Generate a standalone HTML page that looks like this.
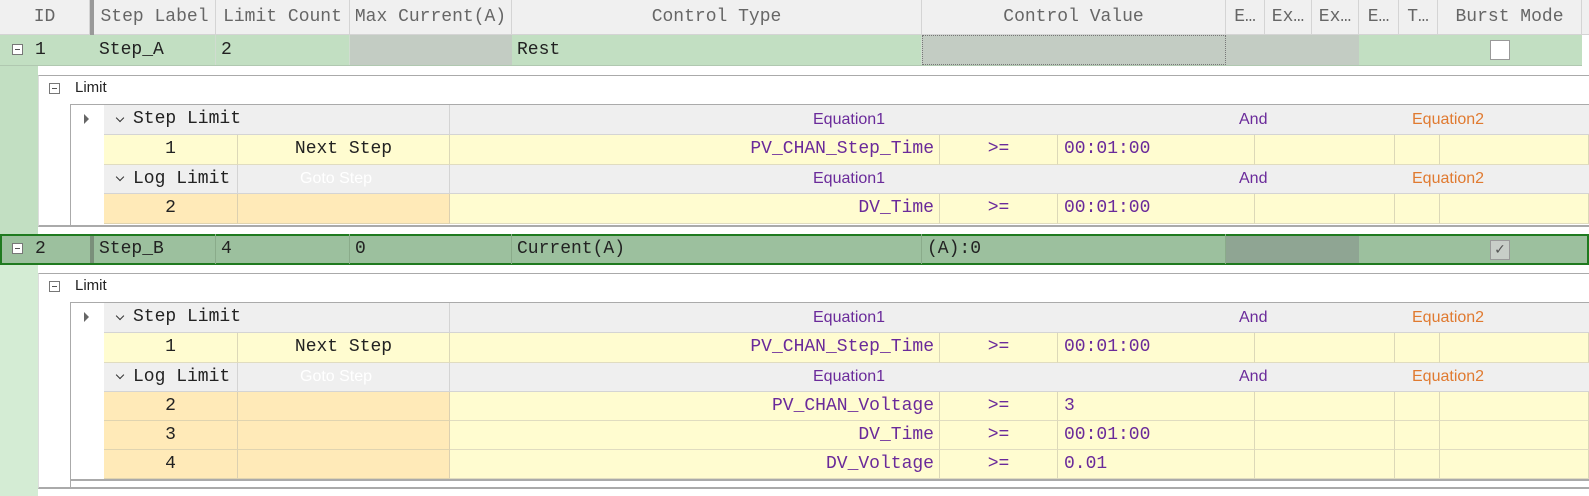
<!DOCTYPE html>
<html><head><meta charset="utf-8"><style>
*{box-sizing:border-box;margin:0;padding:0}
body{width:1589px;height:496px;overflow:hidden;background:#fff;position:relative;font-family:"Liberation Mono",monospace;font-size:18px;color:#222}
.a{position:absolute;white-space:nowrap;overflow:hidden}
.h{background:#f0f0f0;border-right:1px solid #d4d4d4;border-bottom:1px solid #d4d4d4;color:#666;text-align:center;line-height:34px;height:35px;top:0}
.c{line-height:30px;padding-left:5px;border-right:1px solid #d0dcd0}
.s{font-family:"Liberation Sans",sans-serif;font-size:16px}
.p{color:#6a2a9a}.o{color:#e07a30}
.gh{background:#efefef;border-bottom:1px solid #d4d4d4}
.y{background:#fffcd0;border-bottom:1px solid #e0dcc0;border-right:1px solid #dcd8b8}
.or{background:#ffeab8;border-bottom:1px solid #e0d4b0;border-right:1px solid #dcd0b0}
.box{border:1px solid #777;width:11px;height:11px;background:#fff}
.box:after{content:"";position:absolute;left:2px;top:4px;width:5px;height:1px;background:#555}
.chev{position:absolute;width:6px;height:6px;border-right:1.5px solid #333;border-bottom:1.5px solid #333;transform:rotate(45deg)}
</style></head><body>
<!-- header -->
<div class="a h" style="left:0;width:90px">ID</div>
<div class="a" style="left:90px;top:0;width:4px;height:66px;background:#999"></div>
<div class="a h" style="left:94px;width:122px">Step Label</div>
<div class="a h" style="left:216px;width:134px">Limit Count</div>
<div class="a h" style="left:350px;width:162px">Max Current(A)</div>
<div class="a h" style="left:512px;width:410px">Control Type</div>
<div class="a h" style="left:922px;width:304px">Control Value</div>
<div class="a h" style="left:1226px;width:39px">E…</div>
<div class="a h" style="left:1265px;width:47px">Ex…</div>
<div class="a h" style="left:1312px;width:47px">Ex…</div>
<div class="a h" style="left:1359px;width:40px">E…</div>
<div class="a h" style="left:1399px;width:39px">T…</div>
<div class="a h" style="left:1438px;width:144px">Burst Mode</div>
<div class="a h" style="left:1582px;width:7px;border-right:none"></div>

<!-- row 1 -->
<div class="a" style="left:0;top:35px;width:1582px;height:31px;background:#c2dfc2;border-bottom:1px solid #b0c8b0"></div>
<div class="a box" style="left:12px;top:44px"></div>
<div class="a c" style="left:30px;top:35px;width:60px;border:none">1</div>
<div class="a c" style="left:94px;top:35px;width:122px">Step_A</div>
<div class="a c" style="left:216px;top:35px;width:134px">2</div>
<div class="a" style="left:350px;top:35px;width:162px;height:30px;background:#c3ccc3"></div>
<div class="a c" style="left:512px;top:35px;width:410px">Rest</div>
<div class="a" style="left:922px;top:35px;width:304px;height:30px;background:#c3ccc3;border:1px dotted #777"></div>
<div class="a" style="left:1226px;top:35px;width:133px;height:30px;background:#c3ccc3"></div>
<div class="a" style="left:1490px;top:40px;width:20px;height:20px;background:#fff;border:1px solid #999"></div>

<!-- detail 1 -->
<div class="a" style="left:0;top:66px;width:38px;height:168px;background:#c2dfc2"></div>
<div class="a" style="left:38px;top:75px;width:1551px;height:152px;border-top:1px solid #aaa;border-bottom:2px solid #aaa;border-left:1px solid #ddd"></div>
<div class="a box" style="left:49px;top:83px"></div>
<div class="a s" style="left:75px;top:78px;font-size:15px;line-height:20px">Limit</div>
<div class="a" style="left:70px;top:104px;width:1519px;height:121px;border-left:1px solid #aaa;border-top:1px solid #aaa"></div>
<div class="a" style="left:84px;top:114px;width:0;height:0;border-left:5px solid #666;border-top:5px solid transparent;border-bottom:5px solid transparent"></div>

<div class="a gh" style="left:104px;top:105px;width:1485px;height:30px"></div>
<div class="a" style="left:449px;top:105px;width:1px;height:30px;background:#d4d4d4"></div>
<div class="chev" style="left:117px;top:115px"></div>
<div class="a" style="left:133px;top:105px;line-height:29px">Step Limit</div>
<div class="a s p" style="left:813px;top:105px;line-height:29px">Equation1</div>
<div class="a s p" style="left:1239px;top:105px;line-height:29px">And</div>
<div class="a s o" style="left:1412px;top:105px;line-height:29px">Equation2</div>

<div class="a y" style="left:104px;top:135px;width:134px;height:30px;text-align:center;line-height:29px">1</div>
<div class="a y" style="left:238px;top:135px;width:212px;height:30px;text-align:center;line-height:29px">Next Step</div>
<div class="a y p" style="left:450px;top:135px;width:490px;height:30px;text-align:right;padding-right:5px;line-height:29px">PV_CHAN_Step_Time</div>
<div class="a y p" style="left:940px;top:135px;width:118px;height:30px;text-align:center;line-height:29px">&gt;=</div>
<div class="a y p" style="left:1058px;top:135px;width:197px;height:30px;padding-left:6px;line-height:29px">00:01:00</div>
<div class="a y" style="left:1255px;top:135px;width:140px;height:30px"></div>
<div class="a y" style="left:1395px;top:135px;width:45px;height:30px"></div>
<div class="a y" style="left:1440px;top:135px;width:149px;height:30px"></div>

<div class="a gh" style="left:104px;top:165px;width:1485px;height:29px"></div>
<div class="a" style="left:237px;top:165px;width:1px;height:29px;background:#d4d4d4"></div>
<div class="a" style="left:449px;top:165px;width:1px;height:29px;background:#d4d4d4"></div>
<div class="chev" style="left:117px;top:174px"></div>
<div class="a" style="left:133px;top:165px;line-height:28px">Log Limit</div>
<div class="a s" style="left:300px;top:165px;line-height:28px;color:#fff">Goto Step</div>
<div class="a s p" style="left:813px;top:165px;line-height:28px">Equation1</div>
<div class="a s p" style="left:1239px;top:165px;line-height:28px">And</div>
<div class="a s o" style="left:1412px;top:165px;line-height:28px">Equation2</div>

<div class="a or" style="left:104px;top:194px;width:134px;height:30px;text-align:center;line-height:29px">2</div>
<div class="a or" style="left:238px;top:194px;width:212px;height:30px"></div>
<div class="a y p" style="left:450px;top:194px;width:490px;height:30px;text-align:right;padding-right:5px;line-height:29px">DV_Time</div>
<div class="a y p" style="left:940px;top:194px;width:118px;height:30px;text-align:center;line-height:29px">&gt;=</div>
<div class="a y p" style="left:1058px;top:194px;width:197px;height:30px;padding-left:6px;line-height:29px">00:01:00</div>
<div class="a y" style="left:1255px;top:194px;width:140px;height:30px"></div>
<div class="a y" style="left:1395px;top:194px;width:45px;height:30px"></div>
<div class="a y" style="left:1440px;top:194px;width:149px;height:30px"></div>

<!-- row 2 -->
<div class="a" style="left:0;top:234px;width:1589px;height:31px;background:#9cc09e;border:2px solid #1f7a1f"></div>
<div class="a" style="left:1226px;top:236px;width:133px;height:27px;background:#8fa593"></div>
<div class="a" style="left:90px;top:236px;width:4px;height:27px;background:#7a8f7a"></div>
<div class="a box" style="left:12px;top:243px"></div>
<div class="a c" style="left:30px;top:234px;width:60px;border:none">2</div>
<div class="a c" style="left:94px;top:234px;width:122px;border-color:#8aab8a">Step_B</div>
<div class="a c" style="left:216px;top:234px;width:134px;border-color:#8aab8a">4</div>
<div class="a c" style="left:350px;top:234px;width:162px;border-color:#8aab8a">0</div>
<div class="a c" style="left:512px;top:234px;width:410px;border-color:#8aab8a">Current(A)</div>
<div class="a c" style="left:922px;top:234px;width:304px;border-color:#8aab8a">(A):0</div>
<div class="a" style="left:1490px;top:240px;width:20px;height:20px;background:#c8cec8;border:1px solid #999;color:#555;font-size:14px;line-height:18px;text-align:center;font-family:'DejaVu Sans',sans-serif">✓</div>

<!-- detail 2 -->
<div class="a" style="left:0;top:265px;width:38px;height:231px;background:#d4ecd4"></div>
<div class="a" style="left:38px;top:273px;width:1551px;height:216px;border-top:1px solid #aaa;border-bottom:2px solid #aaa;border-left:1px solid #ddd"></div>
<div class="a box" style="left:49px;top:281px"></div>
<div class="a s" style="left:75px;top:276px;font-size:15px;line-height:20px">Limit</div>
<div class="a" style="left:70px;top:302px;width:1519px;height:185px;border-left:1px solid #aaa;border-top:1px solid #aaa"></div>
<div class="a" style="left:84px;top:312px;width:0;height:0;border-left:5px solid #666;border-top:5px solid transparent;border-bottom:5px solid transparent"></div>

<div class="a gh" style="left:104px;top:303px;width:1485px;height:30px"></div>
<div class="a" style="left:449px;top:303px;width:1px;height:30px;background:#d4d4d4"></div>
<div class="chev" style="left:117px;top:313px"></div>
<div class="a" style="left:133px;top:303px;line-height:29px">Step Limit</div>
<div class="a s p" style="left:813px;top:303px;line-height:29px">Equation1</div>
<div class="a s p" style="left:1239px;top:303px;line-height:29px">And</div>
<div class="a s o" style="left:1412px;top:303px;line-height:29px">Equation2</div>

<div class="a y" style="left:104px;top:333px;width:134px;height:30px;text-align:center;line-height:29px">1</div>
<div class="a y" style="left:238px;top:333px;width:212px;height:30px;text-align:center;line-height:29px">Next Step</div>
<div class="a y p" style="left:450px;top:333px;width:490px;height:30px;text-align:right;padding-right:5px;line-height:29px">PV_CHAN_Step_Time</div>
<div class="a y p" style="left:940px;top:333px;width:118px;height:30px;text-align:center;line-height:29px">&gt;=</div>
<div class="a y p" style="left:1058px;top:333px;width:197px;height:30px;padding-left:6px;line-height:29px">00:01:00</div>
<div class="a y" style="left:1255px;top:333px;width:140px;height:30px"></div>
<div class="a y" style="left:1395px;top:333px;width:45px;height:30px"></div>
<div class="a y" style="left:1440px;top:333px;width:149px;height:30px"></div>

<div class="a gh" style="left:104px;top:363px;width:1485px;height:29px"></div>
<div class="a" style="left:237px;top:363px;width:1px;height:29px;background:#d4d4d4"></div>
<div class="a" style="left:449px;top:363px;width:1px;height:29px;background:#d4d4d4"></div>
<div class="chev" style="left:117px;top:372px"></div>
<div class="a" style="left:133px;top:363px;line-height:28px">Log Limit</div>
<div class="a s" style="left:300px;top:363px;line-height:28px;color:#fff">Goto Step</div>
<div class="a s p" style="left:813px;top:363px;line-height:28px">Equation1</div>
<div class="a s p" style="left:1239px;top:363px;line-height:28px">And</div>
<div class="a s o" style="left:1412px;top:363px;line-height:28px">Equation2</div>

<div class="a or" style="left:104px;top:392px;width:134px;height:29px;text-align:center;line-height:28px">2</div>
<div class="a or" style="left:238px;top:392px;width:212px;height:29px"></div>
<div class="a y p" style="left:450px;top:392px;width:490px;height:29px;text-align:right;padding-right:5px;line-height:28px">PV_CHAN_Voltage</div>
<div class="a y p" style="left:940px;top:392px;width:118px;height:29px;text-align:center;line-height:28px">&gt;=</div>
<div class="a y p" style="left:1058px;top:392px;width:197px;height:29px;padding-left:6px;line-height:28px">3</div>
<div class="a y" style="left:1255px;top:392px;width:140px;height:29px"></div>
<div class="a y" style="left:1395px;top:392px;width:45px;height:29px"></div>
<div class="a y" style="left:1440px;top:392px;width:149px;height:29px"></div>

<div class="a or" style="left:104px;top:421px;width:134px;height:29px;text-align:center;line-height:28px">3</div>
<div class="a or" style="left:238px;top:421px;width:212px;height:29px"></div>
<div class="a y p" style="left:450px;top:421px;width:490px;height:29px;text-align:right;padding-right:5px;line-height:28px">DV_Time</div>
<div class="a y p" style="left:940px;top:421px;width:118px;height:29px;text-align:center;line-height:28px">&gt;=</div>
<div class="a y p" style="left:1058px;top:421px;width:197px;height:29px;padding-left:6px;line-height:28px">00:01:00</div>
<div class="a y" style="left:1255px;top:421px;width:140px;height:29px"></div>
<div class="a y" style="left:1395px;top:421px;width:45px;height:29px"></div>
<div class="a y" style="left:1440px;top:421px;width:149px;height:29px"></div>

<div class="a or" style="left:104px;top:450px;width:134px;height:29px;text-align:center;line-height:28px">4</div>
<div class="a or" style="left:238px;top:450px;width:212px;height:29px"></div>
<div class="a y p" style="left:450px;top:450px;width:490px;height:29px;text-align:right;padding-right:5px;line-height:28px">DV_Voltage</div>
<div class="a y p" style="left:940px;top:450px;width:118px;height:29px;text-align:center;line-height:28px">&gt;=</div>
<div class="a y p" style="left:1058px;top:450px;width:197px;height:29px;padding-left:6px;line-height:28px">0.01</div>
<div class="a y" style="left:1255px;top:450px;width:140px;height:29px"></div>
<div class="a y" style="left:1395px;top:450px;width:45px;height:29px"></div>
<div class="a y" style="left:1440px;top:450px;width:149px;height:29px"></div>
<div class="a" style="left:70px;top:479px;width:1519px;height:2px;background:#aaa"></div>
</body></html>
